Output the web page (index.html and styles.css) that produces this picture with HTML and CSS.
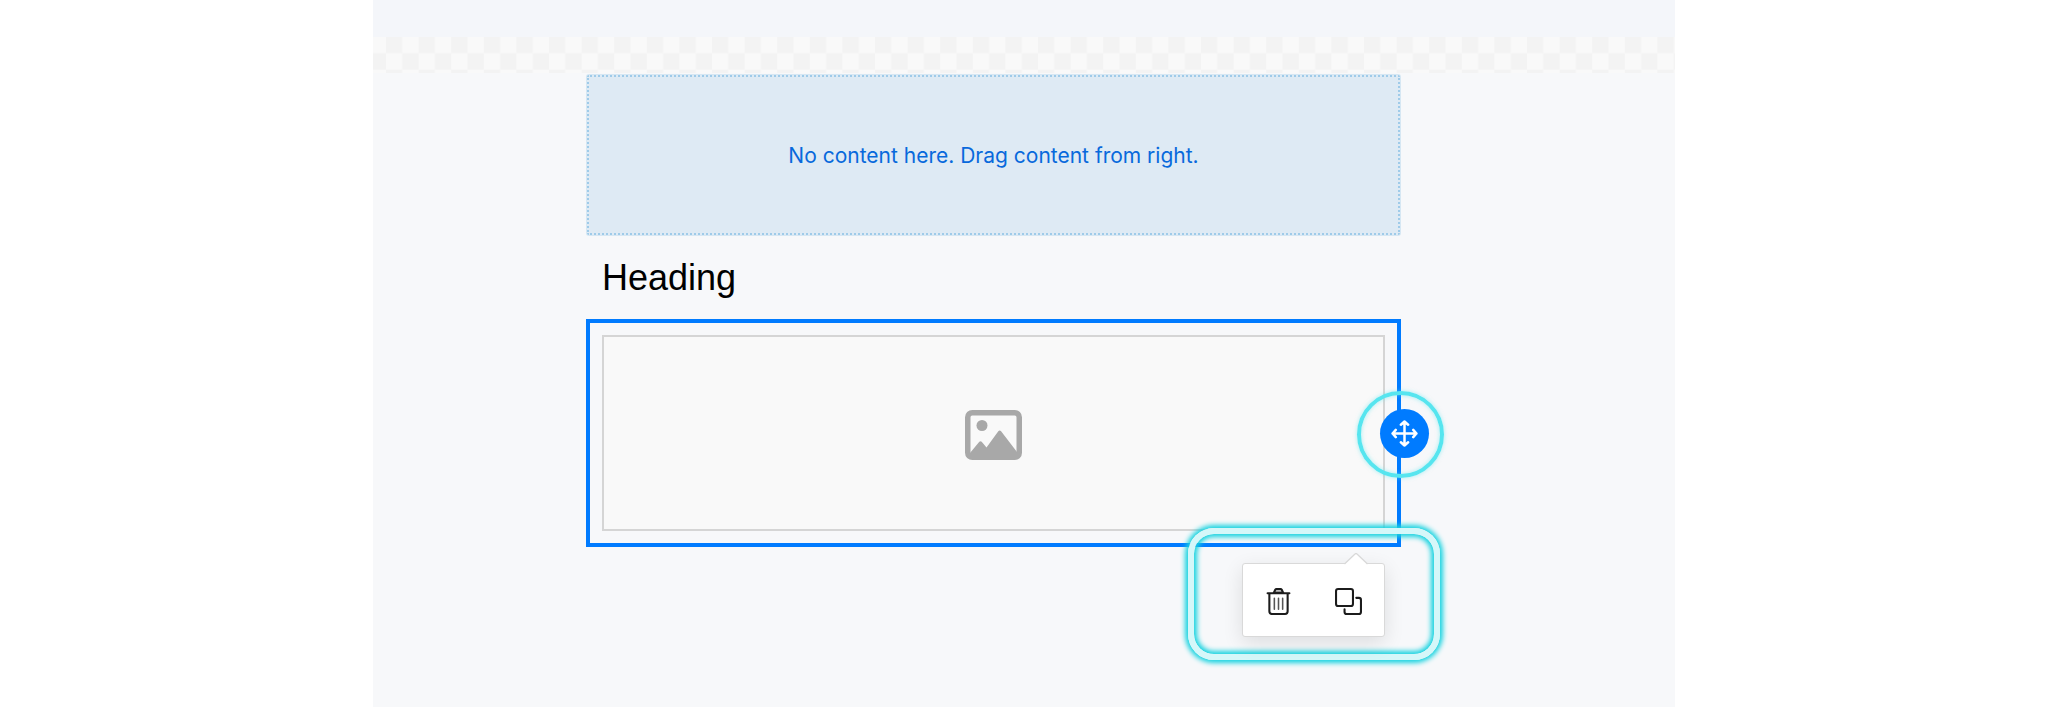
FILE: index.html
```html
<!DOCTYPE html>
<html lang="en">
<head>
<meta charset="utf-8">
<meta name="viewport" content="width=device-width, initial-scale=1">
<title>Page editor</title>
<link rel="stylesheet" href="styles.css">
</head>
<body>
<main class="editor">
  <div class="toolbar-space"></div>
  <svg class="checker" aria-hidden="true">
    <defs>
      <pattern id="tiles" width="32.6" height="32.6" x="13" y="0" patternUnits="userSpaceOnUse">
        <rect width="32.6" height="32.6" fill="#f9f9f9"/>
        <path d="M0 0h16.3v16.3H0zM16.3 16.3h16.3v16.3H16.3z" fill="#f3f3f3"/>
      </pattern>
    </defs>
    <rect width="100%" height="100%" fill="url(#tiles)"/>
  </svg>
  <div class="canvas">
    <section class="dropzone"><p class="dropzone-text">No content here. Drag content from right.</p></section>
    <h1 class="heading">Heading</h1>
    <section class="selected">
      <div class="image-slot">
        <svg class="image-icon" viewBox="0 0 57 50" role="img" aria-label="Image placeholder">
          <rect x="2.75" y="2.75" width="51.5" height="44.5" rx="4.5" fill="none" stroke="#a8a8a8" stroke-width="5.5"/>
          <circle cx="17" cy="15.5" r="5.5" fill="#a8a8a8"/>
          <path d="M5 43L14.3 31.8q1.2-1.2 2.4 0L21.5 37.5 33.3 21.3q1.4-1.6 2.8 0L52 42v5H5z" fill="#a8a8a8"/>
        </svg>
      </div>
      <span class="ring"></span>
      <button class="move" type="button" aria-label="Move">
        <svg class="move-icon" viewBox="0 0 26 26" fill="none" stroke="#fff" stroke-width="2.4" stroke-linecap="round" stroke-linejoin="round">
          <path d="M13 1.5v23M1.5 13h23M9.5 4.6L13 1.5l3.5 3.1M9.5 21.4l3.5 3.1 3.5-3.1M4.6 9.5L1.5 13l3.1 3.5M21.4 9.5l3.1 3.5-3.1 3.5"/>
        </svg>
      </button>
      <span class="glow"></span>
      <div class="popover">
        <svg class="arrow" viewBox="0 0 24 12" aria-hidden="true"><path d="M0 12L1 11 11 1q1-1 2 0L23 11l1 1z" fill="#fff"/><path d="M0.5 11L11 1q1-1 2 0L23.5 11" fill="none" stroke="#d9d9d9" stroke-width="1.3"/></svg>
        <button class="action" type="button" aria-label="Delete">
          <svg class="action-icon" viewBox="0 0 26 26" fill="none" stroke="#1c1c1c" stroke-width="2" stroke-linecap="round" stroke-linejoin="round">
            <path d="M8.5 4.5L10 1.5Q10.3 1 11 1h4q.7 0 1 .5l1.5 3z" fill="#bbb"/>
            <path d="M2.5 5h21M4.2 5.5v17q0 2.5 2.5 2.5h12.6q2.5 0 2.5-2.5v-17"/>
            <path d="M9 9.8v10.7M13 9.8v10.7M17 9.8v10.7" stroke="#555" stroke-width="1.5"/>
          </svg>
        </button>
        <button class="action" type="button" aria-label="Duplicate">
          <svg class="action-icon" viewBox="0 0 26 26" fill="none" stroke="#1c1c1c" stroke-width="2" stroke-linecap="round" stroke-linejoin="round">
            <rect x="1" y="1" width="16.3" height="16.3" rx="2"/>
            <path d="M20.5 9.5H23q2 0 2 2V23q0 2-2 2H11.2q-2 0-2-2v-2.5"/>
          </svg>
        </button>
      </div>
    </section>
  </div>
</main>
</body>
</html>
```
FILE: styles.css
```css
* { box-sizing: border-box; }
body { margin: 0; background: #fff; font-family: "Liberation Sans", Arial, sans-serif; }
.editor { display: flex; flex-direction: column; min-height: 100vh; margin: 0 373px; background: #f7f8fa; }
.toolbar-space { height: 37px; background: #f4f6fa; }
.checker { display: block; width: 100%; height: 36px; }
.canvas { display: flex; flex-direction: column; padding: 2px 274px 0 213px; }
.dropzone { display: flex; align-items: center; justify-content: center; height: 160px; padding-top: 2px; margin: 0 1px; border: 2px dotted #9fcbe9; border-radius: 2px; background: #deeaf4; box-shadow: 0 0 0 1px #d6e7f3; }
.dropzone-text { margin: 0; font-family: Inter, sans-serif; font-size: 21px; line-height: 28px; color: #0869dc; }
.heading { margin: 0; padding: 23px 16px 21px; font-size: 36px; font-weight: 400; line-height: 40px; color: #000; }
.selected { position: relative; padding: 12px; border: 4px solid #007bff; }
.image-slot { display: flex; align-items: center; justify-content: center; height: 196px; border: 2px solid #d5d5d5; background: #f9f9f9; }
.image-icon { width: 57px; height: 50px; margin-top: 4px; }
.ring { position: absolute; top: 68px; right: -47px; width: 87px; height: 87px; border: 4px solid #56e5ef; border-radius: 50%; box-shadow: 0 0 4px #56e5ef88, inset 0 0 4px #56e5ef88; }
.move { position: absolute; top: 86px; right: -32px; display: flex; align-items: center; justify-content: center; width: 49px; height: 49px; padding: 0; border: 0; border-radius: 50%; background: #007bff; }
.move-icon { width: 27px; height: 27px; }
.glow { position: absolute; top: 205px; right: -43px; width: 252px; height: 132px; border: 6px solid #d5f7f9; border-radius: 26px; box-shadow: 0 0 5px 3px #17d3e0, inset 0 0 5px 3px #17d3e0; }
.popover { position: absolute; top: 240px; right: 12px; display: flex; align-items: center; justify-content: space-between; width: 143px; height: 74px; padding: 2px 22px 0; border: 1px solid #d9d9d9; border-radius: 3px; background: #fff; box-shadow: 0 6px 20px #0000001c; }
.arrow { position: absolute; top: -11px; right: 16px; width: 24px; height: 12px; }
.action { display: flex; padding: 0; border: 0; background: transparent; }
.action-icon { width: 27px; height: 27px; }
```
